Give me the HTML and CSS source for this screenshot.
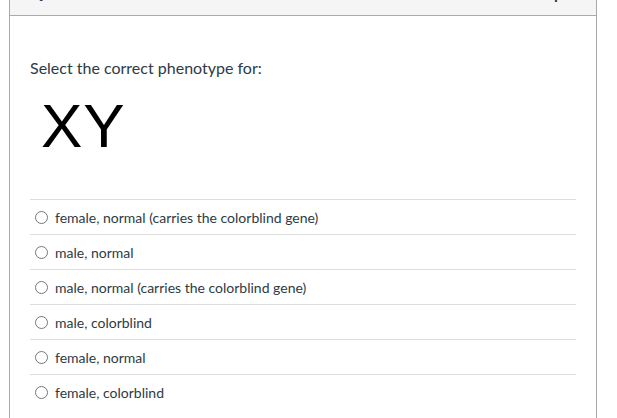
FILE: index.html
```html
<!DOCTYPE html>
<html lang="en">
<head>
<meta charset="utf-8">
<title>Question</title>
<link rel="stylesheet" href="styles.css">
</head>
<body>
<div class="question">
  <div class="question-header">
    <span class="question-name">Question 1</span>
    <span class="question-points">1 pts</span>
  </div>
  <div class="question-body">
    <p class="question-text">Select the correct phenotype for:</p>
    <div class="genotype">XY</div>
    <ul class="answers">
      <li class="answer"><span class="radio"></span><span class="label">female, normal (carries the colorblind gene)</span></li>
      <li class="answer"><span class="radio"></span><span class="label">male, normal</span></li>
      <li class="answer"><span class="radio"></span><span class="label">male, normal (carries the colorblind gene)</span></li>
      <li class="answer"><span class="radio"></span><span class="label">male, colorblind</span></li>
      <li class="answer"><span class="radio"></span><span class="label">female, normal</span></li>
      <li class="answer"><span class="radio"></span><span class="label">female, colorblind</span></li>
    </ul>
  </div>
</div>
</body>
</html>
```
FILE: styles.css
```css
html, body {
  margin: 0;
  padding: 0;
  background: #fff;
  overflow: hidden;
}
body {
  font-family: Lato, "Open Sans", sans-serif;
  color: #2d3b45;
}
.question {
  margin-left: 9px;
  width: 588px;
  box-sizing: border-box;
  border-left: 1px solid #aaa;
  border-right: 1px solid #aaa;
  min-height: 448px;
}
.question-header {
  margin-top: -30px;
  height: 45px;
  background: #f5f5f5;
  border-bottom: 1px solid #aaa;
  display: flex;
  align-items: center;
  justify-content: space-between;
  padding: 0 20px;
  font-weight: bold;
  font-size: 16px;
  color: #2d3b45;
}
.question-body {
  padding: 41px 20px 0;
}
.question-text {
  margin: 0;
  font-size: 16px;
  line-height: 22px;
}
.genotype {
  margin-top: 17px;
  padding-left: 11px;
  font-family: "Liberation Sans", Arial, sans-serif;
  font-size: 62px;
  line-height: 60px;
  letter-spacing: 1px;
  color: #000;
}
.answers {
  list-style: none;
  margin: 43px 0 0;
  padding: 0;
}
.answer {
  display: flex;
  align-items: center;
  gap: 7px;
  height: 34px;
  border-top: 1px solid #ddd;
  padding-left: 5px;
  font-size: 14px;
}
.radio {
  width: 13px;
  height: 13px;
  box-sizing: border-box;
  border: 1px solid #777;
  border-radius: 50%;
  background: #fff;
  flex: none;
}
```
